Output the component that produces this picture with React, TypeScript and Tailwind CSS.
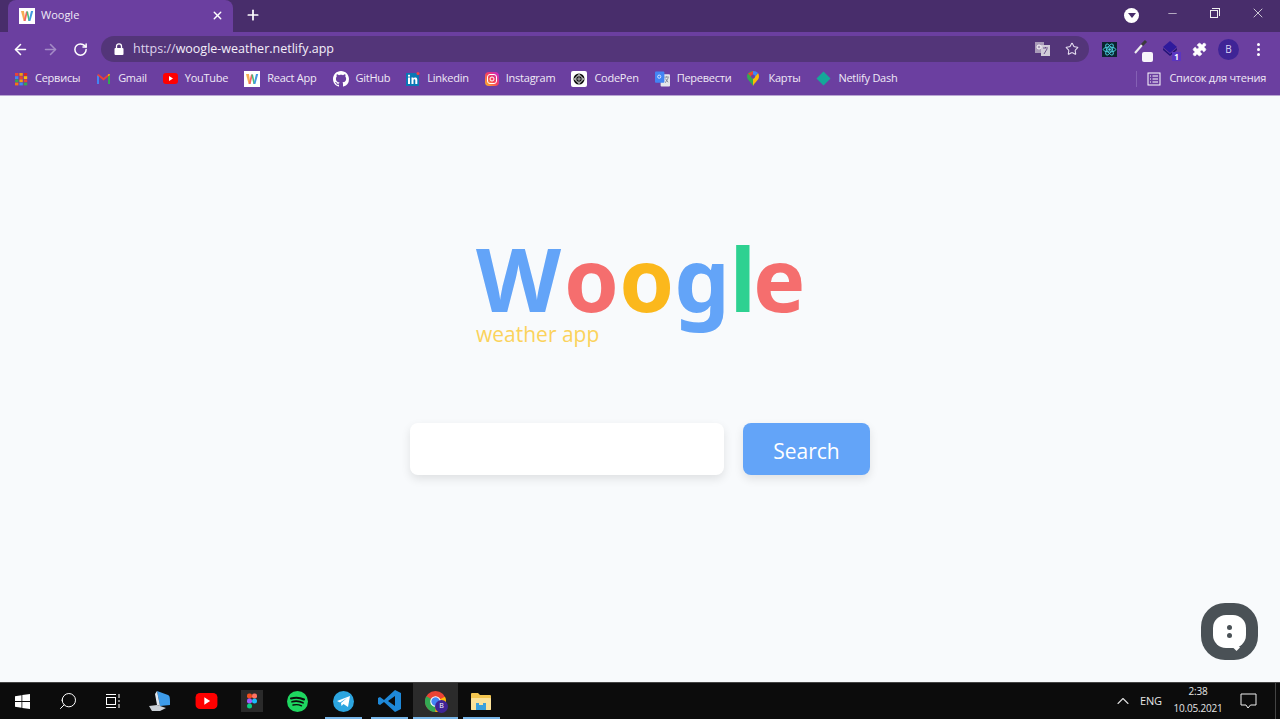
import React from "react";
import { ArrowLeft, ArrowRight, RotateCw, Star, Puzzle, Plus, X, Minus, ChevronUp, Search } from "lucide-react";

const WLogo = ({ size = 16 }: { size?: number }) => (
  <svg width={size} height={size} viewBox="0 0 16 16" className="shrink-0">
    <rect width="16" height="16" fill="#fff" />
    <path d="M2 3 L4.600 13 L6.400 13 L5 3Z" fill="#f6ad55" />
    <path d="M4.800 13 L7 3.500 L8.800 3.500 L6.600 13Z" fill="#f56565" />
    <path d="M7.400 3.500 L9.400 13 L11 13 L9 3.500Z" fill="#48bb78" />
    <path d="M9.600 13 L12 3 L14.200 3 L11.400 13Z" fill="#4299e1" />
  </svg>
);

const Apps = () => (
  <svg width="14" height="14" viewBox="0 0 14 14" className="shrink-0">
    {["#ea4335", "#f59e0b", "#dc2626", "#4285f4", "#ea4335", "#fbbc05", "#34a853", "#f59e0b", "#ea4335", "#f97316", "#4285f4", "#34a853"].map((c, i) => (
      <rect key={i} x={1 + (i % 3) * 4.4} y={1 + Math.floor(i / 3) * 3.2} width="3.400" height="2.800" fill={c} />
    ))}
  </svg>
);
const Gmail = () => (
  <svg width="15" height="12" viewBox="0 0 15 12" className="shrink-0">
    <path d="M1 11V2l2 1v8Z" fill="#4285f4" />
    <path d="M12 11V3l2-1v9Z" fill="#34a853" />
    <path d="M1 2l1.500-1L7.500 5 12.500 1 14 2 7.500 7.500Z" fill="#ea4335" />
    <path d="M12 3l2-1-.5-1-1.500.5Z" fill="#fbbc05" />
  </svg>
);
const Yt = ({ w = 15, h = 11 }: { w?: number; h?: number }) => (
  <svg width={w} height={h} viewBox="0 0 15 11" className="shrink-0">
    <rect width="15" height="11" rx="3" fill="#f00" />
    <path d="M6 3l4 2.500-4 2.500Z" fill="#fff" />
  </svg>
);
const Gh = () => (
  <svg width="16" height="16" viewBox="0 0 16 16" className="shrink-0" fill="#fff">
    <path d="M8 0C3.580 0 0 3.580 0 8c0 3.540 2.290 6.530 5.470 7.590.4.070.55-.17.55-.38 0-.19-.01-.82-.01-1.490-2.010.37-2.530-.49-2.690-.94-.09-.23-.48-.94-.82-1.130-.28-.15-.68-.52-.01-.53.63-.01 1.080.58 1.230.82.72 1.210 1.870.87 2.330.66.070-.52.28-.87.51-1.070-1.780-.2-3.640-.89-3.640-3.950 0-.87.31-1.590.82-2.150-.08-.2-.36-1.020.08-2.120 0 0 .67-.21 2.200.82.64-.18 1.320-.27 2-.27s1.360.09 2 .27c1.530-1.040 2.200-.82 2.200-.82.44 1.100.16 1.920.08 2.120.51.56.82 1.270.82 2.150 0 3.070-1.870 3.750-3.650 3.950.29.25.54.73.54 1.480 0 1.070-.01 1.930-.01 2.200 0 .21.15.46.55.38A8.010 8.010 0 0 0 16 8c0-4.420-3.580-8-8-8Z" />
  </svg>
);
const Li = () => (
  <svg width="14" height="14" viewBox="0 0 14 14" className="shrink-0">
    <rect y="1" width="13" height="13" fill="#0a78b5" />
    <rect x="2" y="5.500" width="2" height="6.500" fill="#fff" />
    <rect x="2" y="2.800" width="2" height="1.800" fill="#fff" />
    <path d="M5.500 5.500h1.900v1c.8-1.400 3.900-1.600 3.900 1.200V12H9.300V8.300c0-1.300-1.800-1.200-1.800.1V12h-2Z" fill="#fff" />
    <circle cx="12" cy="1.500" r="1.500" fill="#ef4444" />
  </svg>
);
const Ig = () => (
  <svg width="14" height="14" viewBox="0 0 14 14" className="shrink-0">
    <defs>
      <linearGradient id="ig" x1="0" y1="1" x2="1" y2="0">
        <stop offset="0" stopColor="#fbbf24" />
        <stop offset=".5" stopColor="#f43f5e" />
        <stop offset="1" stopColor="#c026d3" />
      </linearGradient>
    </defs>
    <rect width="14" height="14" rx="4" fill="url(#ig)" />
    <rect x="2.500" y="2.500" width="9" height="9" rx="2.500" fill="none" stroke="#fff" />
    <circle cx="7" cy="7" r="2" fill="none" stroke="#fff" />
  </svg>
);
const Cp = () => (
  <svg width="16" height="16" viewBox="0 0 16 16" className="shrink-0">
    <rect width="16" height="16" rx="2" fill="#fff" />
    <circle cx="8" cy="8" r="5.500" fill="#111" />
    <path d="M8 3.500 12.500 8 8 12.500 3.500 8Z" fill="none" stroke="#fff" />
    <path d="M3.500 8h9M8 3.500v9" stroke="#fff" strokeWidth=".6" />
  </svg>
);
const Gt = () => (
  <svg width="15" height="16" viewBox="0 0 16 16" className="shrink-0">
    <rect x="6" y="3" width="10" height="13" rx="1" fill="#e5e7eb" />
    <path d="M10 6h5M12.500 5v1M11 12l3-5M11 7.500l3 4" stroke="#6b7280" strokeWidth=".8" fill="none" />
    <rect width="10" height="12" rx="1" fill="#4285f4" />
    <circle cx="4.500" cy="5.500" r="1.700" fill="none" stroke="#fff" strokeWidth=".8" />
  </svg>
);
const Maps = () => (
  <svg width="12" height="15" viewBox="0 0 12 15" className="mr-[2px] shrink-0">
    <path d="M6 15C4 11 0 9 0 5.500 0 2.500 2.500 0 6 0Z" fill="#34a853" />
    <path d="M6 15c2-4 6-6 6-9.500C12 4 11.500 3 11 2L6 8Z" fill="#fbbc05" />
    <path d="M6 0c2 0 4 .7 5 2L6 8Z" fill="#4285f4" />
    <path d="M1 2.500 6 0v8Z" fill="#ea4335" />
    <circle cx="6" cy="5.500" r="2" fill="#6b3fa0" />
  </svg>
);
const Nf = () => (
  <svg width="15" height="15" viewBox="0 0 15 15" className="shrink-0">
    <path d="M7.500 .5 14.500 7.500 7.500 14.500 .5 7.500Z" fill="#14a899" />
  </svg>
);

const bookmarks: [React.ReactNode, string][] = [
  [<Apps />, "Сервисы"],
  [<Gmail />, "Gmail"],
  [<Yt />, "YouTube"],
  [<WLogo />, "React App"],
  [<Gh />, "GitHub"],
  [<Li />, "Linkedin"],
  [<Ig />, "Instagram"],
  [<Cp />, "CodePen"],
  [<Gt />, "Перевести"],
  [<Maps />, "Карты"],
  [<Nf />, "Netlify Dash"],
];

const Task = ({ className, children, line, active }: { className: string; children: React.ReactNode; line?: string; active?: boolean }) => (
  <div className={`relative flex h-full items-center justify-center ${active ? "bg-[#2b2b2b]" : ""} ${className}`}>
    {children}
    {line && <div className={`absolute bottom-0 h-[2px] bg-[#77b5e8] ${line}`} />}
  </div>
);

export default function App() {
  return (
    <div className="flex h-[719px] w-[1280px] flex-col overflow-hidden bg-[#f8fafc] font-['Open_Sans',sans-serif]">
      {/* Tab strip */}
      <div className="flex h-8 shrink-0 items-center bg-[#482d6b] pl-2">
        <div className="flex h-8 w-[225px] items-center rounded-t-lg bg-[#6b3fa0] pb-[1px] pl-[11px] pr-[9px] text-white">
          <WLogo />
          <span className="ml-[6px] flex-1 text-[11px] text-[#f0eaf7]">Woogle</span>
          <X size={13} strokeWidth={2.5} />
        </div>
        <div className="mb-[2px] ml-[12px] text-white">
          <Plus size={16} strokeWidth={2.6} />
        </div>
        <div className="flex-1" />
        <div className="flex items-center text-[#eee]">
          <div className="mb-[2px] mr-[10px] flex h-[15px] w-[15px] items-center justify-center rounded-full bg-white">
            <div className="h-0 w-0 border-x-[4px] border-t-[5px] border-x-transparent border-t-[#482d6b]" />
          </div>
          <div className="mb-[6px] flex w-[46px] justify-center"><Minus size={13} strokeWidth={1.2} /></div>
          <div className="mb-[6px] flex w-[40px] justify-center">
            <div className="relative h-[10px] w-[10px]">
              <div className="absolute left-0 top-[2px] h-2 w-2 border border-[#eee]" />
              <div className="absolute right-0 top-0 h-2 w-2 border-r border-t border-[#eee]" />
            </div>
          </div>
          <div className="mb-[6px] flex w-[45px] justify-center"><X size={16} strokeWidth={1.2} /></div>
        </div>
      </div>

      {/* Toolbar */}
      <div className="flex h-8 shrink-0 items-center bg-[#6b3fa0] pl-3 pt-[2px] text-white">
        <ArrowLeft size={17} strokeWidth={2.2} />
        <ArrowRight size={17} strokeWidth={2.2} className="ml-[13px] text-[#a48bc6]" />
        <RotateCw size={15} strokeWidth={2.4} className="ml-[14px]" />
        <div className="ml-[13px] flex h-[26px] w-[988px] items-center rounded-full bg-[#533579] pl-3 pr-[10px]">
          <svg width="10" height="12" viewBox="0 0 10 12" className="ml-[1px]">
            <path d="M2.500 5V3.300a2.500 2.500 0 0 1 5 0V5" fill="none" stroke="#fff" strokeWidth="1.300" />
            <rect x="0.500" y="5" width="9" height="7" rx="1" fill="#fff" />
          </svg>
          <span className="ml-[9px] flex-1 text-[12.5px] text-[#f4effa]">
            <span className="text-[#ded3ec]">https://</span>woogle-weather.netlify.app
          </span>
          <svg width="15" height="14" viewBox="0 0 15 14" className="mr-[15px]">
            <rect x="0" y="0" width="9" height="11" fill="#a99bb8" />
            <rect x="6" y="3" width="9" height="11" fill="#d1cbd8" />
            <path d="M8 6h5M10.500 5v1M9 12l3-5" stroke="#533579" strokeWidth=".8" fill="none" />
            <circle cx="4" cy="5" r="2" fill="none" stroke="#fff" />
          </svg>
          <Star size={14} strokeWidth={1.8} className="text-[#e6def0]" />
        </div>
        <div className="ml-[13px] flex h-[15px] w-[15px] items-center justify-center bg-[#0b2530]">
          <svg width="15" height="15" viewBox="-12 -12 24 24" fill="none" stroke="#4fd6e8" strokeWidth="1.400">
            <ellipse rx="10" ry="4" />
            <ellipse rx="10" ry="4" transform="rotate(60)" />
            <ellipse rx="10" ry="4" transform="rotate(120)" />
            <circle r="2" fill="#4fd6e8" stroke="none" />
          </svg>
        </div>
        <div className="relative ml-[16px] h-[24px] w-[20px]">
          <svg width="16" height="16" viewBox="0 0 16 16" className="absolute left-0 top-[2px]" fill="none">
            <path d="M2 14 9 6" stroke="#eee" strokeWidth="2" />
            <path d="M9 6l4-4" stroke="#3b3b3b" strokeWidth="3" />
          </svg>
          <div className="absolute left-[9px] top-[15px] h-[10px] w-[11px] rounded-[2px] bg-[#f7f5fa]" />
        </div>
        <div className="relative ml-[9px] h-[24px] w-[20px]">
          <svg width="16" height="16" viewBox="0 0 16 16" className="absolute left-0 top-[4px]">
            <path d="M8 0 15 6 8 12 1 6Z" fill="#2e1a9c" />
            <path d="M1 7 8 13 15 7 15 9 8 15 1 9Z" fill="#231478" />
          </svg>
          <div className="absolute left-[10px] top-[15px] flex h-[9px] w-[9px] items-center justify-center bg-[#5b35c0] text-[8px] font-bold leading-none">1</div>
        </div>
        <Puzzle size={15} fill="#fff" strokeWidth={1} className="ml-[10px]" />
        <div className="ml-[11px] flex h-[21px] w-[21px] items-center justify-center rounded-full bg-[#3f2496] text-[10px] text-[#ddd6f5]">B</div>
        <div className="ml-[18px] flex flex-col gap-[2px]">
          <div className="h-[3px] w-[3px] rounded-full bg-white" />
          <div className="h-[3px] w-[3px] rounded-full bg-white" />
          <div className="h-[3px] w-[3px] rounded-full bg-white" />
        </div>
      </div>

      {/* Bookmarks */}
      <div className="flex h-8 shrink-0 items-center border-b border-[#b9a6d2] bg-[#6b3fa0] pb-[2px] pl-[14px] pr-[14px] text-[11px] tracking-[-0.25px] text-[#efe9f6]">
        <div className="flex items-center gap-[16px]">
          {bookmarks.map(([icon, label]) => (
            <div key={label} className="flex items-center gap-[7px]">
              {icon}
              <span>{label}</span>
            </div>
          ))}
        </div>
        <div className="flex-1" />
        <div className="mr-[10px] h-[16px] w-px bg-[#8460b4]" />
        <svg width="14" height="14" viewBox="0 0 14 14" fill="none" stroke="#fff" className="mr-[8px]">
          <rect x="1" y="1" width="12" height="12" />
          <path d="M3 4h1M3 7h1M3 10h1M5.500 4H11M5.500 7H11M5.500 10H11" />
        </svg>
        <span>Список для чтения</span>
      </div>

      {/* Page */}
      <main className="relative flex min-h-0 flex-1 flex-col items-center pt-[137px]">
        <div className="w-[460px]">
          <div className="pl-[66px]">
            <h1 className="h-[90px] font-['Noto_Sans',sans-serif] text-[88px] font-bold leading-[90px]">
              <span className="text-[#63a4f8]">W</span>
              <span className="ml-[3px] text-[#f56e6e]">o</span>
              <span className="text-[#fbb81c]">o</span>
              <span className="text-[#63a4f8]">g</span>
              <span className="text-[#2ed191]">l</span>
              <span className="-ml-[3px] text-[#f56e6e]">e</span>
            </h1>
            <p className="-mt-[4px] text-[21px] leading-[30px] text-[#fbd35c]">weather app</p>
          </div>
          <form className="mt-[74px] flex justify-between">
            <input className="h-[52px] w-[314px] rounded-lg bg-white shadow-[0_4px_10px_rgba(0,0,0,0.1)] outline-none" />
            <button type="button" className="h-[52px] w-[127px] rounded-lg bg-[#63a4f8] pt-[5px] text-[21px] text-white shadow-[0_4px_10px_rgba(0,0,0,0.1)]">
              Search
            </button>
          </form>
        </div>

        {/* Chat bubble */}
        <div className="absolute left-[1201px] top-[507px] flex h-[57px] w-[57px] items-center justify-center rounded-[24px] bg-[#4a5156]">
          <div className="relative flex h-[33px] w-[33px] flex-col items-center justify-center gap-[3px] rounded-[13px] bg-white">
            <div className="h-[5px] w-[5px] rounded-full bg-[#4a5156]" />
            <div className="h-[5px] w-[5px] rounded-full bg-[#4a5156]" />
            <div className="absolute bottom-[-2px] right-[7px] h-[5px] w-[5px] rotate-45 bg-white" />
          </div>
        </div>
      </main>

      {/* Taskbar */}
      <footer className="flex h-[37px] shrink-0 items-center border-t border-[#444] bg-[#0c0c0c] text-white">
        <Task className="w-[45px]">
          <svg width="15" height="15" viewBox="0 0 15 15" fill="#fff">
            <path d="M0 2.200 6.500 1.200V7H0ZM7.300 1 15 0V7H7.300ZM0 8H6.500V13.800L0 12.800ZM7.300 8H15V15L7.300 14Z" />
          </svg>
        </Task>
        <Task className="w-[45px]"><Search size={20} strokeWidth={1.2} className="-scale-x-100" /></Task>
        <Task className="w-[46px]">
          <svg width="16" height="16" viewBox="0 0 16 16" fill="none" stroke="#fff">
            <rect x="1.500" y="4.500" width="9" height="7" />
            <path d="M1 1.500h10M1 14.500h10M14 1v4M14 7v2M14 11v4" />
          </svg>
        </Task>
        <Task className="w-[47px]">
          <svg width="24" height="22" viewBox="0 0 24 22">
            <path d="M9 1 20 5c2 1 2 3 2 10l-10 1Z" fill="#3d9be9" />
            <path d="M7 4l2-3 3 15-3-1Z" fill="#dfe6ee" />
            <path d="M1 16l8-1 9 3-6 3H4Z" fill="#c9ced4" />
          </svg>
        </Task>
        <Task className="w-[46px]"><Yt w={23} h={16} /></Task>
        <Task className="w-[45px]">
          <div className="flex h-[22px] w-[22px] items-center justify-center bg-[#2a2a2a]">
            <svg width="10" height="16" viewBox="0 0 10 15">
              <rect x="0" y="0" width="5" height="5" rx="2" fill="#f24e1e" />
              <rect x="5" y="0" width="5" height="5" rx="2" fill="#ff7262" />
              <rect x="0" y="5" width="5" height="5" rx="2" fill="#a259ff" />
              <circle cx="7.500" cy="7.500" r="2.500" fill="#1abcfe" />
              <rect x="0" y="10" width="5" height="5" rx="2.500" fill="#0acf83" />
            </svg>
          </div>
        </Task>
        <Task className="w-[46px]">
          <div className="flex h-[21px] w-[21px] items-center justify-center rounded-full bg-[#1ed760]">
            <svg width="15" height="11" viewBox="0 0 15 11" fill="none" stroke="#0c0c0c" strokeLinecap="round">
              <path d="M1 2.500c4-1.200 9-1 13 1" strokeWidth="2" />
              <path d="M2 5.800c3.500-1 7.500-.7 11 1" strokeWidth="1.700" />
              <path d="M3 9c3-.7 6-.5 8.500.8" strokeWidth="1.400" />
            </svg>
          </div>
        </Task>
        <Task className="w-[47px]" line="left-[5px] right-[5px]">
          <div className="flex h-[21px] w-[21px] items-center justify-center rounded-full bg-[#2ca5e0]">
            <svg width="13" height="11" viewBox="0 0 13 11" fill="#fff">
              <path d="M0 5 13 0 11 11 6.500 8 4.500 10 4 7 10 2 3 6.500Z" />
            </svg>
          </div>
        </Task>
        <Task className="w-[46px]" line="left-[4px] right-[5px]">
          <svg width="24" height="24" viewBox="0 0 24 24">
            <path d="M17 1 23 4V20L17 23 6 13 2 16 0 15V9L2 8 6 11Z" fill="#1e88d8" />
            <path d="M17 7 10 12 17 17Z" fill="#0c0c0c" />
          </svg>
        </Task>
        <Task className="w-[45px]" active line="left-0 right-0">
          <svg width="21" height="21" viewBox="0 0 20 20" className="mr-[1px]">
            <circle cx="10" cy="10" r="10" fill="#ea4335" />
            <path d="M10 20A10 10 0 0 1 1.300 5L10 10Z" fill="#34a853" />
            <path d="M19 5.500A10 10 0 0 1 10 20L10 10Z" fill="#fbbc05" />
            <circle cx="10" cy="10" r="4.500" fill="#4285f4" stroke="#fff" />
          </svg>
          <div className="absolute left-[22px] top-[17px] flex h-[13px] w-[13px] items-center justify-center rounded-full bg-[#3f2496] text-[7px] text-white">B</div>
        </Task>
        <Task className="w-[46px]" line="left-[5px] right-[4px]">
          <svg width="20" height="17" viewBox="0 0 20 17">
            <path d="M0 1a1 1 0 0 1 1-1h6l2 2h10a1 1 0 0 1 1 1v13a1 1 0 0 1-1 1H1a1 1 0 0 1-1-1Z" fill="#f4c64f" />
            <rect y="5" width="20" height="12" rx="1" fill="#fbe29a" />
            <rect x="5" y="10" width="10" height="7" fill="#3aa0dc" />
            <rect x="8" y="10" width="4" height="2" fill="#fbe29a" />
          </svg>
        </Task>
        <div className="flex-1" />
        <ChevronUp size={20} strokeWidth={1.3} className="text-[#ddd]" />
        <span className="ml-[7px] w-[26px] text-[11px] tracking-[-0.2px] text-[#e5e5e5]">ENG</span>
        <div className="ml-[6px] flex w-[52px] flex-col items-center text-[10px] leading-[17px] tracking-[-0.2px] text-[#e5e5e5]">
          <span className="-translate-y-[1px]">2:38</span>
          <span className="-translate-y-[1px]">10.05.2021</span>
        </div>
        <svg width="17" height="16" viewBox="0 0 17 16" fill="none" stroke="#eee" className="ml-[16px]">
          <path d="M1 1h15v11h-5.500L8 15 6 12H1Z" />
        </svg>
        <div className="ml-[18px] h-full w-px bg-[#444]" />
        <div className="w-[4px]" />
      </footer>
    </div>
  );
}
